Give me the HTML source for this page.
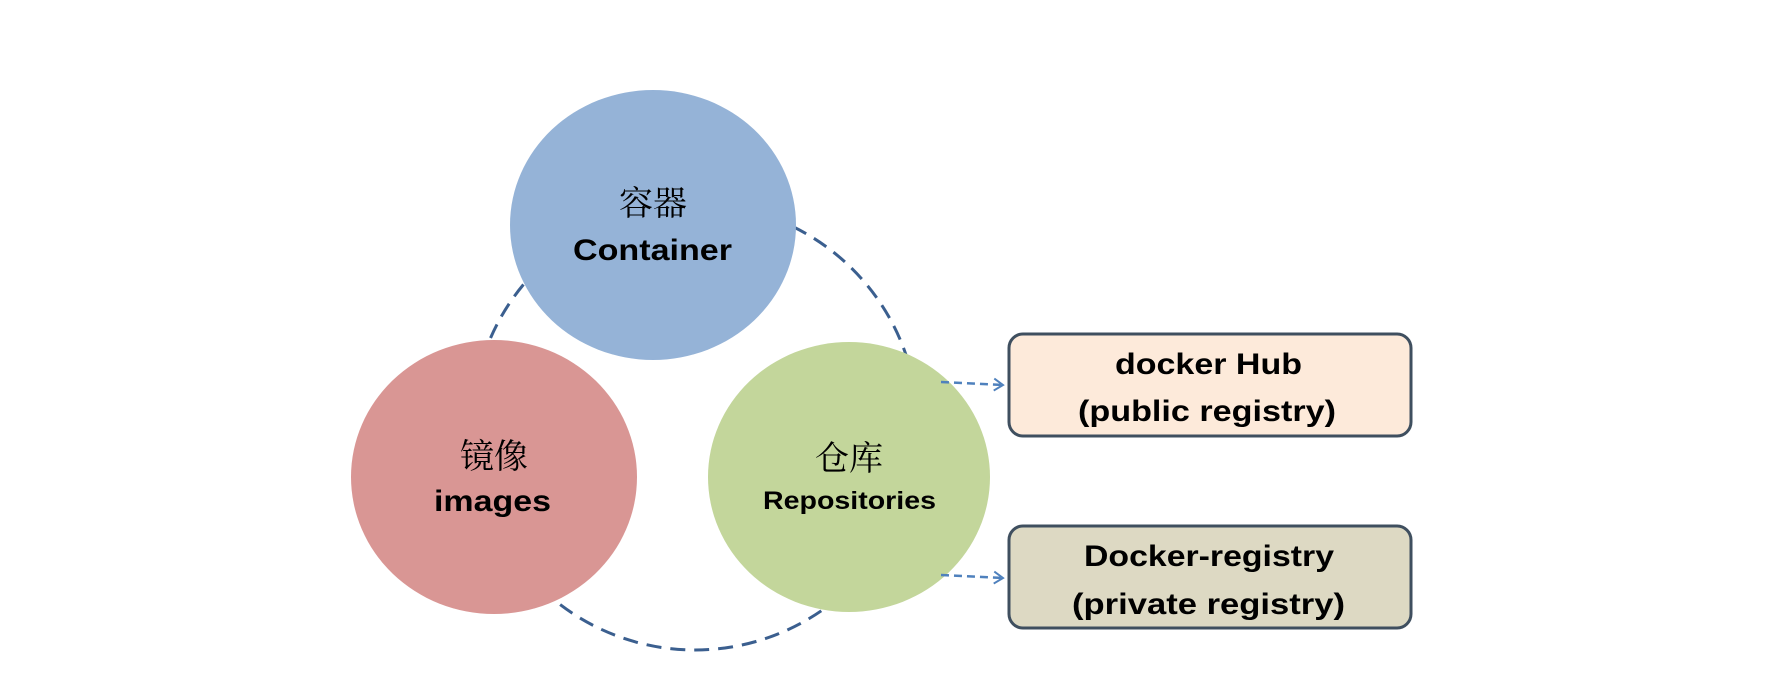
<!DOCTYPE html>
<html><head><meta charset="utf-8"><style>html,body{margin:0;padding:0;background:#fff;width:1766px;height:700px;overflow:hidden}</style></head>
<body>
<svg width="1766" height="700" viewBox="0 0 1766 700" xmlns="http://www.w3.org/2000/svg">
<defs><marker id="ar" markerWidth="14" markerHeight="14" refX="11" refY="7" orient="auto" markerUnits="userSpaceOnUse"><path d="M2,1 L11,7 L2,13" fill="none" stroke="#4f81bd" stroke-width="2"/></marker></defs>
<circle cx="695" cy="427" r="223" fill="none" stroke="#3b5f8f" stroke-width="3" stroke-dasharray="15,9"/>
<ellipse cx="653" cy="225" rx="143" ry="135" fill="#95b3d7"/>
<ellipse cx="494" cy="477" rx="143" ry="137" fill="#d99694"/>
<ellipse cx="849" cy="477" rx="141" ry="135" fill="#c3d69b"/>
<line x1="941" y1="382" x2="1003" y2="385" stroke="#4f81bd" stroke-width="2.5" stroke-dasharray="8,5" marker-end="url(#ar)"/>
<line x1="941" y1="575" x2="1003" y2="578" stroke="#4f81bd" stroke-width="2.5" stroke-dasharray="8,5" marker-end="url(#ar)"/>
<rect x="1009" y="334" width="402" height="102" rx="14" fill="#fdeada" stroke="#3f4f5f" stroke-width="3"/>
<rect x="1009" y="526" width="402" height="102" rx="14" fill="#ddd9c3" stroke="#3f4f5f" stroke-width="3"/>
<g font-family="'Noto Serif CJK SC','Noto Sans CJK SC',serif" font-size="34" text-anchor="middle" fill="#000">
<text x="653" y="215">容器</text>
<text x="494" y="468">镜像</text>
<text x="849" y="470">仓库</text>
</g>
<g font-family="'Liberation Sans',sans-serif" font-weight="bold" fill="#000">
<text x="573" y="260" font-size="30" textLength="159" lengthAdjust="spacingAndGlyphs">Container</text>
<text x="434" y="511" font-size="30" textLength="117" lengthAdjust="spacingAndGlyphs">images</text>
<text x="763" y="509" font-size="25" textLength="173" lengthAdjust="spacingAndGlyphs">Repositories</text>
<text x="1115" y="374" font-size="30" textLength="187" lengthAdjust="spacingAndGlyphs">docker Hub</text>
<text x="1078" y="421" font-size="30" textLength="258" lengthAdjust="spacingAndGlyphs">(public registry)</text>
<text x="1084" y="566" font-size="30" textLength="250" lengthAdjust="spacingAndGlyphs">Docker-registry</text>
<text x="1072" y="614" font-size="30" textLength="273" lengthAdjust="spacingAndGlyphs">(private registry)</text>
</g>
</svg>
</body></html>
